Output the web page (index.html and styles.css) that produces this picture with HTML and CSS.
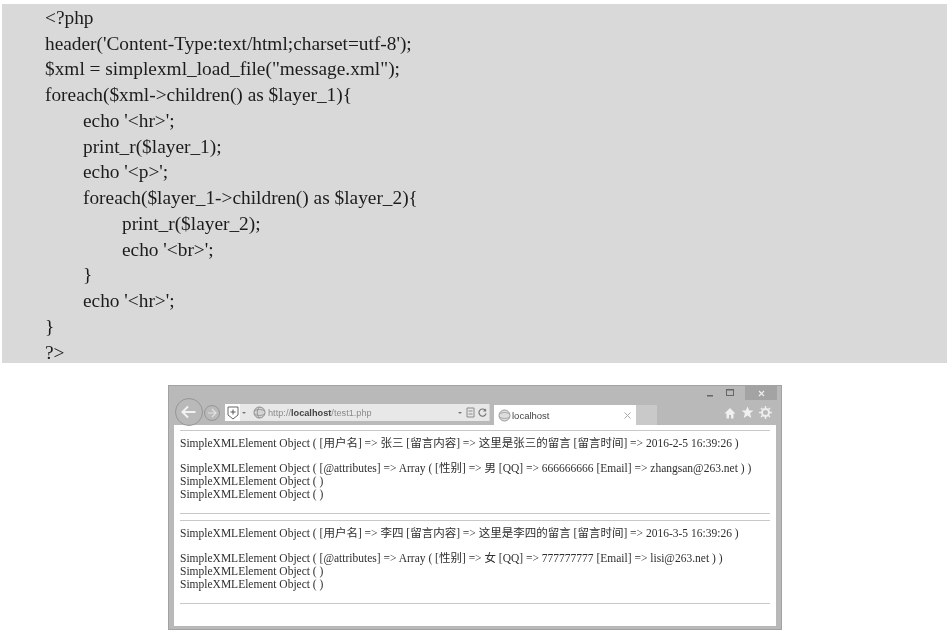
FILE: index.html
```html
<!DOCTYPE html>
<html lang="zh">
<head>
<meta charset="utf-8">
<title>localhost</title>
<link rel="stylesheet" href="styles.css">
</head>
<body>
<pre class="code"><code>&lt;?php
header('Content-Type:text/html;charset=utf-8');
$xml = simplexml_load_file("message.xml");
foreach($xml-&gt;children() as $layer_1){
<span class="i1">echo '&lt;hr&gt;';</span>
<span class="i1">print_r($layer_1);</span>
<span class="i1">echo '&lt;p&gt;';</span>
<span class="i1">foreach($layer_1-&gt;children() as $layer_2){</span>
<span class="i2">print_r($layer_2);</span>
<span class="i2">echo '&lt;br&gt;';</span>
<span class="i1">}</span>
<span class="i1">echo '&lt;hr&gt;';</span>
}
?&gt;</code></pre>
<div class="window">
  <div class="controls">
    <svg class="ctl" width="10" height="10" viewBox="0 0 10 10"><rect x="1" y="7" width="6" height="1.500" fill="#666"/></svg>
    <svg class="ctl" width="11" height="10" viewBox="0 0 11 10"><rect x="1.500" y="1.500" width="7" height="6" fill="none" stroke="#666"/><rect x="1" y="1" width="8" height="1.500" fill="#666"/></svg>
    <div class="close"><svg width="7" height="7" viewBox="0 0 7 7"><path d="M1 1l5 5M6 1l-5 5" stroke="#efefef" stroke-width="1.200"/></svg></div>
  </div>
  <div class="nav">
    <div class="back"><svg width="16" height="14" viewBox="0 0 16 14"><path d="M7 1.500L1.500 7 7 12.500M1.500 7h13" fill="none" stroke="#f2f2f2" stroke-width="2"/></svg></div>
    <div class="forward"><svg width="10" height="10" viewBox="0 0 10 10"><path d="M5 1l4 4-4 4M9 5H1" fill="none" stroke="#e2e2e2" stroke-width="1.200"/></svg></div>
    <div class="address">
      <div class="shield"><svg width="12" height="14" viewBox="0 0 12 14"><path d="M1 1h10v8l-5 4-5-4z" fill="#fff" stroke="#666"/><path d="M6 3.500v5M3.500 6h5" stroke="#555"/></svg></div>
      <span class="caret shield-caret"></span>
      <svg class="globe" width="13" height="13" viewBox="0 0 13 13"><circle cx="6.500" cy="6.500" r="5.500" fill="#d4d4d4" stroke="#8a8a8a"/><path d="M1.500 5c3-2 7-2 10 0M1.500 8c3 2 7 2 10 0M6.500 1c-3 3-3 8 0 11" fill="none" stroke="#8a8a8a" stroke-width=".8"/></svg>
      <span class="url">http://<b>localhost</b>/test1.php</span>
      <span class="caret drop"></span>
      <svg class="tool doc" width="9" height="11" viewBox="0 0 9 11"><path d="M1 1h7v9H1zM2.500 4h4M2.500 7h4" fill="none" stroke="#8a8a8a"/></svg>
      <svg class="tool" width="9" height="9" viewBox="0 0 10 10"><path d="M8.500 3A4 4 0 1 0 9 6" fill="none" stroke="#777" stroke-width="1.300"/><path d="M9 .5v3.500H5.500z" fill="#777"/></svg>
    </div>
    <div class="tab">
      <svg width="13" height="13" viewBox="0 0 13 13"><circle cx="6.500" cy="6.500" r="5.500" fill="#ddd" stroke="#999"/><path d="M1.500 5c3-2 7-2 10 0M1.500 8c3 2 7 2 10 0" fill="none" stroke="#999" stroke-width=".8"/></svg>
      <span class="tab-title">localhost</span>
      <svg class="tab-x" width="7" height="7" viewBox="0 0 7 7"><path d="M.5.500l6 6M6.500.500l-6 6" stroke="#aaa"/></svg>
    </div>
    <div class="newtab"></div>
    <div class="tools">
      <svg width="12" height="12" viewBox="0 0 12 12"><path d="M6 1L.5 6.500H2.500V11.500H5V8h2v3.500h2.500V6.500h2z" fill="#f0f0f0"/></svg>
      <svg width="13" height="13" viewBox="0 0 13 13"><path d="M6.500.500l1.700 4h4.300l-3.400 2.800 1.200 4.700-3.800-2.600L2.700 12l1.200-4.700L.5 4.500h4.300z" fill="#f0f0f0"/></svg>
      <svg width="13" height="13" viewBox="0 0 13 13"><circle cx="6.500" cy="6.500" r="3.500" fill="none" stroke="#eee" stroke-width="2"/><path d="M6.500 0v3M6.500 10v3M0 6.500h3M10 6.500h3M2 2l2 2M9 9l2 2M11 2L9 4M4 9l-2 2" stroke="#eee" stroke-width="1.500"/></svg>
    </div>
  </div>
  <div class="page">
    <hr class="rule">
    <p class="entry">SimpleXMLElement Object ( [用户名] =&gt; 张三 [留言内容] =&gt; 这里是张三的留言 [留言时间] =&gt; 2016-2-5 16:39:26 )</p>
    <p class="entry details">SimpleXMLElement Object ( [@attributes] =&gt; Array ( [性别] =&gt; 男 [QQ] =&gt; 666666666 [Email] =&gt; zhangsan@263.net ) )<br>SimpleXMLElement Object ( )<br>SimpleXMLElement Object ( )</p>
    <hr class="rule end">
    <hr class="rule next">
    <p class="entry">SimpleXMLElement Object ( [用户名] =&gt; 李四 [留言内容] =&gt; 这里是李四的留言 [留言时间] =&gt; 2016-3-5 16:39:26 )</p>
    <p class="entry details">SimpleXMLElement Object ( [@attributes] =&gt; Array ( [性别] =&gt; 女 [QQ] =&gt; 777777777 [Email] =&gt; lisi@263.net ) )<br>SimpleXMLElement Object ( )<br>SimpleXMLElement Object ( )</p>
    <hr class="rule end">
  </div>
</div>
</body>
</html>
```
FILE: styles.css
```css
* { box-sizing: border-box; }
html, body { margin: 0; background: #fff; }
body { height: 633px; overflow: hidden; padding-top: 4px; font-family: "Liberation Serif", "Noto Sans CJK SC", serif; color: #222; }
.code {
  margin: 0 2px 0 2px;
  height: 359px;
  padding: 1px 0 0 43px;
  background: #d9d9d9;
  font: 19.350px/25.730px "Liberation Serif", serif;
  color: #1c1c1c;
  filter: blur(.4px);
}
.code code { font: inherit; }
.i1 { margin-left: 38px; }
.i2 { margin-left: 77px; }
.window {
  margin: 22px 0 0 168px;
  width: 614px;
  height: 245px;
  padding: 1px 6px 4px;
  background: #b9b9b9;
  box-shadow: inset 0 0 0 1px #a2a2a2;
  display: flex;
  flex-direction: column;
  filter: blur(.4px);
}
.controls { height: 14px; display: flex; justify-content: flex-end; align-items: center; margin-right: -1px; }
.ctl { margin-right: 9px; }
.close { width: 32px; height: 14px; background: #a3a3a3; display: flex; align-items: center; justify-content: center; }
.nav { height: 25px; display: flex; align-items: center; }
.back {
  width: 28px; height: 28px; margin: 0 1px; border-radius: 50%; border: 1px solid #969696;
  display: flex; align-items: center; justify-content: center; flex: none;
  position: relative; top: -1px;
}
.forward {
  width: 16px; height: 16px; border-radius: 50%; border: 1px solid #969696;
  display: flex; align-items: center; justify-content: center; flex: none;
}
.address {
  margin-left: 5px; width: 265px; height: 17px; background: #e8e8e8; border-right: 1px solid #d2d2d2;
  display: flex; align-items: center; flex: none; font: 9.200px "Liberation Sans", sans-serif; color: #8a8a8a;
}
.shield { width: 15px; height: 17px; background: #fff; display: flex; align-items: center; justify-content: center; flex: none; }
.caret { width: 0; height: 0; border: 2px solid transparent; border-top: 2.500px solid #777; border-bottom: 0; flex: none; }
.shield-caret { margin-left: 2px; }
.globe { margin: 0 2px 0 7px; flex: none; }
.url { flex: 1; white-space: nowrap; }
.url b { color: #444; font-weight: 700; }
.drop { margin-right: 4px; }
.tool { margin-right: 2px; flex: none; }
.doc { margin-right: 3px; }
.tab {
  margin-left: 4px; width: 142px; height: 20px; align-self: flex-end; background: #fff;
  display: flex; align-items: center; padding: 0 5px 0 4px; flex: none;
  font: 9.500px "Liberation Sans", sans-serif; color: #444;
}
.tab-title { flex: 1; margin-left: 1px; }
.newtab { width: 21px; height: 20px; align-self: flex-end; background: #c9c9c9; flex: none; }
.tools { flex: 1; display: flex; justify-content: flex-end; gap: 5px; align-items: center; padding-right: 4px; }
.page {
  flex: 1; background: #fff; padding: 5px 6px 0;
  font: 11.500px/13px "Liberation Serif", "Noto Sans CJK SC", serif; color: #2e2e2e;
}
.rule { margin: 0; height: 1px; border: 0; background: #c8c8c8; }
.entry { margin: 6px 0 0; white-space: nowrap; }
.details { margin-top: 12px; }
.end { margin-top: 12px; }
.next { margin-top: 6px; }
```
